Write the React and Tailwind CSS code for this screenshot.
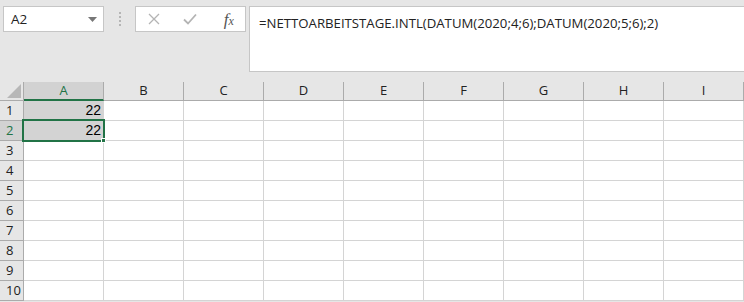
import React from "react";

const cols = ["A", "B", "C", "D", "E", "F", "G", "H", "I"];
const rows = [1, 2, 3, 4, 5, 6, 7, 8, 9, 10];

const ui = { fontFamily: '"Open Sans", "Noto Sans", sans-serif' };

const App = () => {
  return (
    <div className="w-[744px] h-[302px] overflow-hidden bg-[#e6e6e6]" style={ui}>
      {/* TOOLBAR */}
      <div className="flex items-start h-[82px] pt-[6px]">
        <div className="ml-[3px] w-[101px] h-[26px] bg-white border border-[#c6c6c6] flex items-center justify-between pl-[7px] pr-[6px]">
          <span className="text-[13.5px] text-[#222]">A2</span>
          <svg width="9" height="5" viewBox="0 0 9 5">
            <path d="M0 0 L9 0 L4.5 5 Z" fill="#777" />
          </svg>
        </div>

        <div className="w-[31px] h-[26px] flex flex-col items-center justify-center gap-[2px]">
          <span className="w-[2px] h-[2px] bg-[#b5b5b5]" />
          <span className="w-[2px] h-[2px] bg-[#b5b5b5]" />
          <span className="w-[2px] h-[2px] bg-[#b5b5b5]" />
          <span className="w-[2px] h-[2px] bg-[#b5b5b5]" />
        </div>

        <div className="w-[111px] h-[26px] bg-white border border-[#c6c6c6] flex items-center">
          <div className="w-[37px] flex justify-center">
            <svg width="12" height="12" viewBox="0 0 12 12">
              <path d="M1 1 L11 11 M11 1 L1 11" stroke="#b4b4b4" strokeWidth="1.3" />
            </svg>
          </div>
          <div className="w-[37px] flex justify-center">
            <svg width="14" height="12" viewBox="0 0 14 12">
              <path d="M1 6.5 L5 10.5 L13 1.5" stroke="#b4b4b4" strokeWidth="1.8" fill="none" />
            </svg>
          </div>
          <div className="w-[37px] flex justify-center pl-[4px]">
            <span
              className="italic text-[17px] text-[#555] leading-none"
              style={{ fontFamily: '"Liberation Serif", serif' }}
            >
              f<span className="text-[12px]">x</span>
            </span>
          </div>
        </div>

        <div className="ml-[3px] flex-1 h-[66px] bg-white border-l border-t border-b border-[#c6c6c6] pl-[9px] pt-[3px]">
          <span className="text-[13.2px] text-[#222] whitespace-nowrap">
            =NETTOARBEITSTAGE.INTL(DATUM(2020;4;6);DATUM(2020;5;6);2)
          </span>
        </div>
      </div>

      {/* SHEET */}
      <div className="grid grid-cols-[24px_repeat(9,80px)]">
        {/* header row */}
        <div className="h-[19px] border-r border-b border-[#ababab] bg-[#e6e6e6] flex items-end justify-end pr-[2px] pb-[2px]">
          <svg width="14" height="14" viewBox="0 0 14 14">
            <path d="M14 0 L14 14 L0 14 Z" fill="#b7b7b7" />
          </svg>
        </div>
        {cols.map((c) =>
          c === "A" ? (
            <div
              key={c}
              className="h-[19px] bg-[#d2d2d2] border-r border-[#ababab] border-b-2 border-b-[#217346] flex items-center justify-center text-[13px] text-[#217346]"
            >
              {c}
            </div>
          ) : (
            <div
              key={c}
              className="h-[19px] bg-[#e6e6e6] border-r border-b border-[#ababab] flex items-center justify-center text-[13px] text-[#222]"
            >
              {c}
            </div>
          )
        )}

        {/* rows */}
        {rows.map((r) => (
          <React.Fragment key={r}>
            <div
              className={
                r === 2
                  ? "h-[20px] bg-[#d2d2d2] border-r border-b border-[#ababab] flex items-center pl-[6px] text-[13px] text-[#217346]"
                  : "h-[20px] bg-[#e6e6e6] border-r border-b border-[#ababab] flex items-center pl-[6px] text-[13px] text-[#222]"
              }
            >
              {r}
            </div>
            {cols.map((c) => {
              const filled = c === "A" && (r === 1 || r === 2);
              return (
                <div
                  key={c}
                  className={
                    filled
                      ? "relative h-[20px] bg-[#d3d3d3] border-r border-b border-[#d4d4d4] flex items-center justify-end pr-[2px] text-[14px] text-black"
                      : "h-[20px] bg-white border-r border-b border-[#d4d4d4]"
                  }
                  style={filled ? { fontFamily: '"Liberation Sans", sans-serif' } : undefined}
                >
                  {filled && "22"}
                  {c === "A" && r === 2 && (
                    <>
                      <div className="absolute -left-[2px] -top-[2px] w-[83px] h-[23px] border-2 border-[#217346]" />
                      <div className="absolute -right-[3px] -bottom-[3px] w-[5px] h-[5px] bg-[#217346] border border-white" />
                    </>
                  )}
                </div>
              );
            })}
          </React.Fragment>
        ))}
      </div>
    </div>
  );
};

export default App;
